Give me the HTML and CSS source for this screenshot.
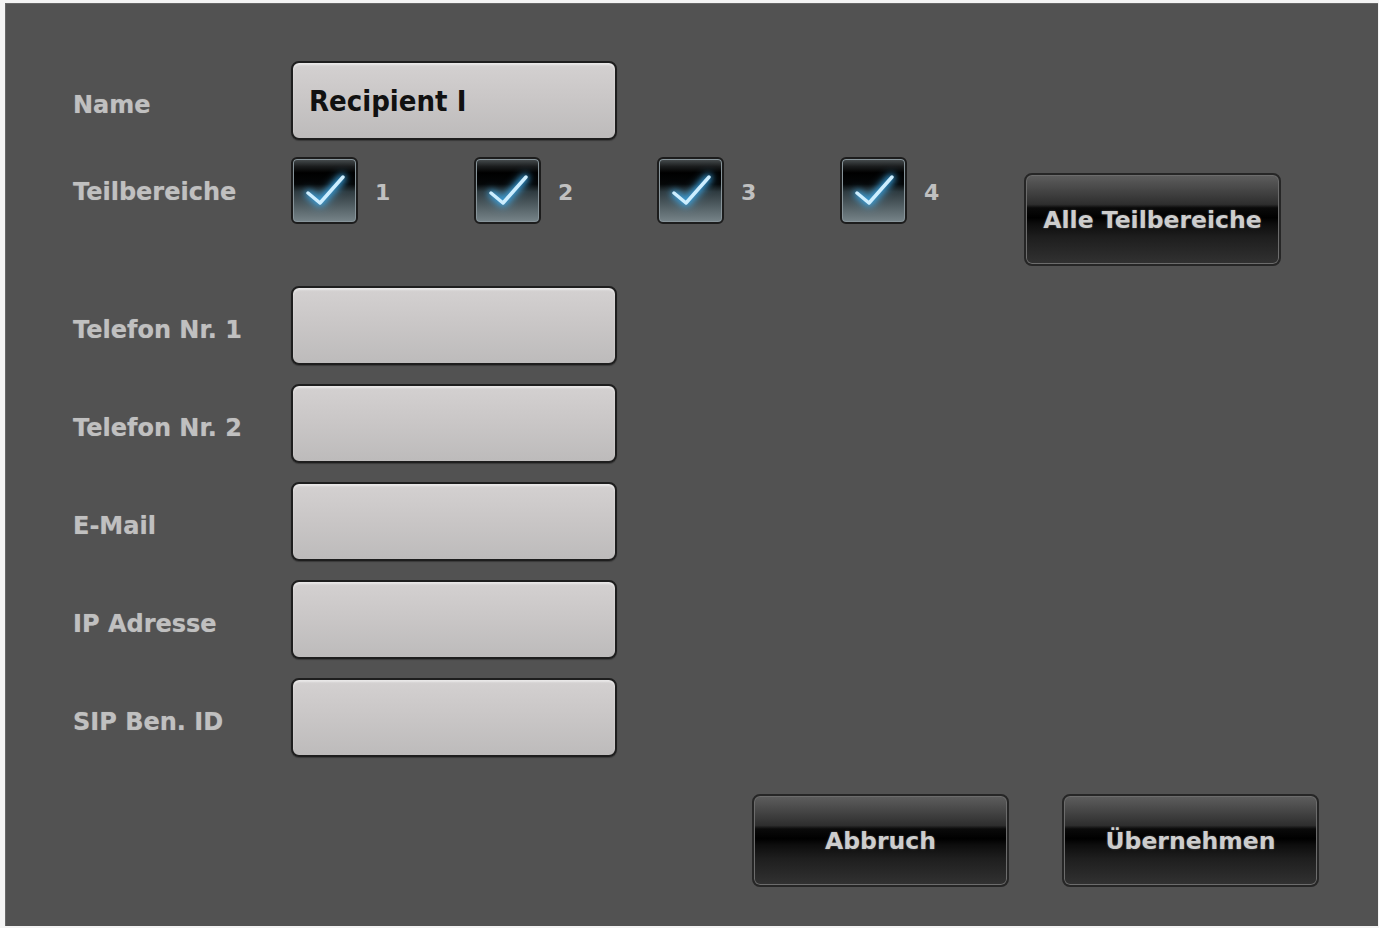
FILE: index.html
```html
<!DOCTYPE html>
<html lang="de">
<head>
    <meta charset="UTF-8">
    <title>Empfänger bearbeiten</title>
    <link rel="stylesheet" href="styles.css">
</head>
<body>
    <div class="panel">
        <div class="row">
            <label class="label">Name</label>
            <div class="field field-name">Recipient I</div>
        </div>

        <div class="row row-areas">
            <label class="label label-areas">Teilbereiche</label>
            <div class="area">
                <span class="check">
                    <svg viewBox="0 0 67 67" width="67" height="67"><polyline points="17,36 29,46 52,20"/></svg>
                </span>
                <span class="area-num">1</span>
            </div>
            <div class="area">
                <span class="check">
                    <svg viewBox="0 0 67 67" width="67" height="67"><polyline points="17,36 29,46 52,20"/></svg>
                </span>
                <span class="area-num">2</span>
            </div>
            <div class="area">
                <span class="check">
                    <svg viewBox="0 0 67 67" width="67" height="67"><polyline points="17,36 29,46 52,20"/></svg>
                </span>
                <span class="area-num">3</span>
            </div>
            <div class="area">
                <span class="check">
                    <svg viewBox="0 0 67 67" width="67" height="67"><polyline points="17,36 29,46 52,20"/></svg>
                </span>
                <span class="area-num">4</span>
            </div>
            <button class="btn btn-all">Alle Teilbereiche</button>
        </div>

        <div class="row row-first">
            <label class="label">Telefon Nr. 1</label>
            <div class="field"></div>
        </div>
        <div class="row">
            <label class="label">Telefon Nr. 2</label>
            <div class="field"></div>
        </div>
        <div class="row">
            <label class="label">E-Mail</label>
            <div class="field"></div>
        </div>
        <div class="row">
            <label class="label">IP Adresse</label>
            <div class="field"></div>
        </div>
        <div class="row">
            <label class="label">SIP Ben. ID</label>
            <div class="field"></div>
        </div>

        <div class="actions">
            <button class="btn btn-cancel">Abbruch</button>
            <button class="btn btn-apply">Übernehmen</button>
        </div>
    </div>
</body>
</html>
```

FILE: styles.css
```css
body {
    margin: 0;
    padding: 0;
    background-color: #f4f4f4;
    font-family: "DejaVu Sans", Verdana, sans-serif;
}
.panel {
    box-sizing: border-box;
    width: 1373px;
    height: 923px;
    margin: 3px 1px 2px 5px;
    padding: 58px 59px 0 68px;
    background-color: #525252;
    box-shadow: inset 1px 1px 0 #686868;
    display: flex;
    flex-direction: column;
}
.row {
    display: flex;
    align-items: center;
    margin-top: 19px;
}
.row:first-child {
    margin-top: 0;
}
.label {
    width: 218px;
    flex-shrink: 0;
    padding-top: 9px;
    color: #c0c0c0;
    font-size: 24px;
    font-weight: bold;
    text-shadow: 0 0 1px rgba(190, 190, 190, 0.5);
}
.field {
    box-sizing: border-box;
    width: 326px;
    height: 79px;
    border: 2px solid #1e1e1e;
    border-radius: 8px;
    background: linear-gradient(#d4d1d1 0%, #cac7c7 45%, #bdbbbb 100%);
    box-shadow: inset 0 2px 2px rgba(255, 255, 255, 0.5), 0 1px 1px rgba(0, 0, 0, 0.3);
}
.field-name {
    display: flex;
    align-items: center;
    padding-left: 16px;
    color: #111;
    font-family: "DejaVu Sans Condensed", "DejaVu Sans", sans-serif;
    font-stretch: condensed;
    font-size: 29px;
    font-weight: bold;
}
.row-areas {
    margin-top: 17px;
    align-items: flex-start;
}
.label-areas {
    height: 67px;
    display: flex;
    align-items: center;
    padding-top: 3px;
    box-sizing: border-box;
}
.area {
    width: 183px;
    display: flex;
    align-items: center;
    gap: 17px;
}
.check {
    box-sizing: border-box;
    width: 67px;
    height: 67px;
    border: 2px solid #1c1c1c;
    border-radius: 6px;
    overflow: hidden;
    background: linear-gradient(#4a5052 0%, #1a1c1d 12%, #000 22%, #050708 40%, #2f3b40 52%, #525f64 75%, #78858a 100%);
    box-shadow: inset 0 0 0 1px #87949a;
}
.check svg {
    display: block;
    margin: -2px;
}
.check polyline {
    fill: none;
    stroke: #cdeeff;
    stroke-width: 3.5;
    stroke-linecap: round;
    stroke-linejoin: round;
    filter: drop-shadow(0 0 3px #2fa6ee) drop-shadow(0 0 4px #4ab4f0);
}
.area-num {
    padding-top: 3px;
    color: #c0c0c0;
    font-size: 22px;
    font-weight: bold;
}
.btn {
    box-sizing: border-box;
    width: 257px;
    height: 93px;
    padding: 0;
    border: 2px solid #262626;
    border-radius: 8px;
    background: linear-gradient(#5e5e5e 0%, #444 18%, #2e2e2e 33%, #0a0a0a 37%, #000 48%, #0d0d0d 55%, #1e1e1e 70%, #323232 100%);
    box-shadow: inset 0 0 0 1px #6c6c6c;
    color: #cdcdcd;
    font-family: "DejaVu Sans", Verdana, sans-serif;
    font-size: 23.5px;
    font-weight: bold;
    text-shadow: 0 0 2px rgba(200, 200, 200, 0.4);
    cursor: pointer;
}
.btn-all {
    margin-top: 16px;
    margin-left: 1px;
}
.row-first {
    margin-top: 20px;
}
.actions {
    display: flex;
    justify-content: flex-end;
    gap: 53px;
    margin-top: 37px;
}
```
